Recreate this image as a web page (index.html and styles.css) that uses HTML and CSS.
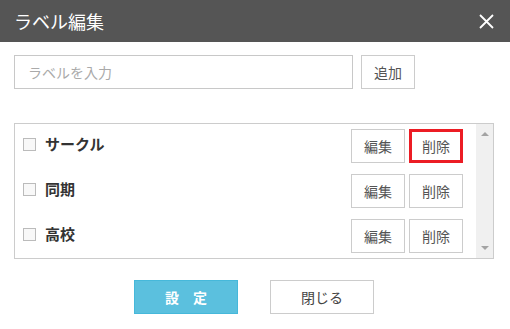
FILE: index.html
```html
<!DOCTYPE html>
<html lang="ja">
<head>
<meta charset="utf-8">
<title>ラベル編集</title>
<link rel="stylesheet" href="styles.css">
</head>
<body>
<div class="dialog">
  <header class="header">
    <h1 class="title">ラベル編集</h1>
    <button class="close" aria-label="閉じる">
      <svg width="15" height="15" viewBox="0 0 15 15"><path d="M1 1L14 14M14 1L1 14" stroke="#fff" stroke-width="1.8" fill="none"/></svg>
    </button>
  </header>
  <div class="body">
    <div class="add-row">
      <input class="label-input" type="text" placeholder="ラベルを入力">
      <button class="btn">追加</button>
    </div>
    <div class="list-box">
      <div class="list">
        <div class="row">
          <span class="check"></span>
          <span class="name">サークル</span>
          <button class="btn">編集</button>
          <button class="btn btn-active">削除</button>
        </div>
        <div class="row">
          <span class="check"></span>
          <span class="name">同期</span>
          <button class="btn">編集</button>
          <button class="btn">削除</button>
        </div>
        <div class="row">
          <span class="check"></span>
          <span class="name">高校</span>
          <button class="btn">編集</button>
          <button class="btn">削除</button>
        </div>
      </div>
      <div class="scrollbar">
        <span class="arrow up"></span>
        <span class="arrow down"></span>
      </div>
    </div>
    <div class="footer">
      <button class="fbtn primary">設　定</button>
      <button class="fbtn">閉じる</button>
    </div>
  </div>
</div>
</body>
</html>
```
FILE: styles.css
```css
* { box-sizing: border-box; }
html, body { margin: 0; padding: 0; background: #fff; }
body {
  width: 510px;
  height: 329px;
  overflow: hidden;
  font-family: "Noto Sans CJK JP", "Noto Sans", sans-serif;
  color: #333;
}
.header {
  height: 42px;
  background: #555;
  display: flex;
  align-items: center;
  justify-content: space-between;
  padding: 0 16px 0 14px;
}
.title {
  margin: 0;
  font-size: 18px;
  font-weight: normal;
  color: #fff;
  line-height: 1;
}
.close {
  border: 0;
  background: none;
  padding: 0;
  width: 15px;
  height: 15px;
  display: block;
}
.close svg { display: block; }
.body { padding: 13px 16px 0 14px; }
.add-row {
  display: flex;
  gap: 8px;
  height: 34px;
}
.label-input {
  width: 339px;
  height: 34px;
  border: 1px solid #c8c8c8;
  padding: 0 13px;
  font-family: inherit;
  font-size: 14px;
  color: #333;
  outline: none;
}
.label-input::placeholder { color: #aaa; }
.btn {
  width: 54px;
  height: 34px;
  border: 1px solid #ccc;
  background: #fff;
  font-family: inherit;
  font-size: 14px;
  color: #555;
  padding: 0;
}
.list-box {
  margin-top: 34px;
  width: 480px;
  height: 136px;
  border: 1px solid #ccc;
  display: flex;
}
.list {
  flex: 1;
  padding: 5px 13px 0 8px;
  display: flex;
  flex-direction: column;
  gap: 11px;
}
.row {
  display: flex;
  align-items: center;
  gap: 4px;
  height: 34px;
}
.check {
  width: 13px;
  height: 13px;
  border: 1px solid #bbb;
  background: #f8f8f8;
  margin-top: -3px;
  margin-right: 5px;
}
.name {
  flex: 1;
  font-size: 15px;
  font-weight: bold;
  color: #333;
  margin-top: -5px;
}
.btn-active { border: 3px solid #ec1c24; }
.scrollbar {
  width: 17px;
  background: #f0f0f0;
  display: flex;
  flex-direction: column;
  justify-content: space-between;
  align-items: center;
  padding: 8px 0 8px;
}
.arrow {
  width: 0;
  height: 0;
  border-left: 4px solid transparent;
  border-right: 4px solid transparent;
}
.arrow.up { border-bottom: 4px solid #a3a3a3; }
.arrow.down { border-top: 4px solid #a3a3a3; }
.footer {
  display: flex;
  justify-content: center;
  gap: 32px;
  margin-top: 21px;
}
.fbtn {
  width: 104px;
  height: 34px;
  border: 1px solid #ccc;
  background: #fff;
  font-family: inherit;
  font-size: 14px;
  color: #444;
  padding: 0;
}
.fbtn.primary {
  background: #5bc0de;
  border-color: #46b8da;
  color: #fff;
  font-weight: bold;
}
```
